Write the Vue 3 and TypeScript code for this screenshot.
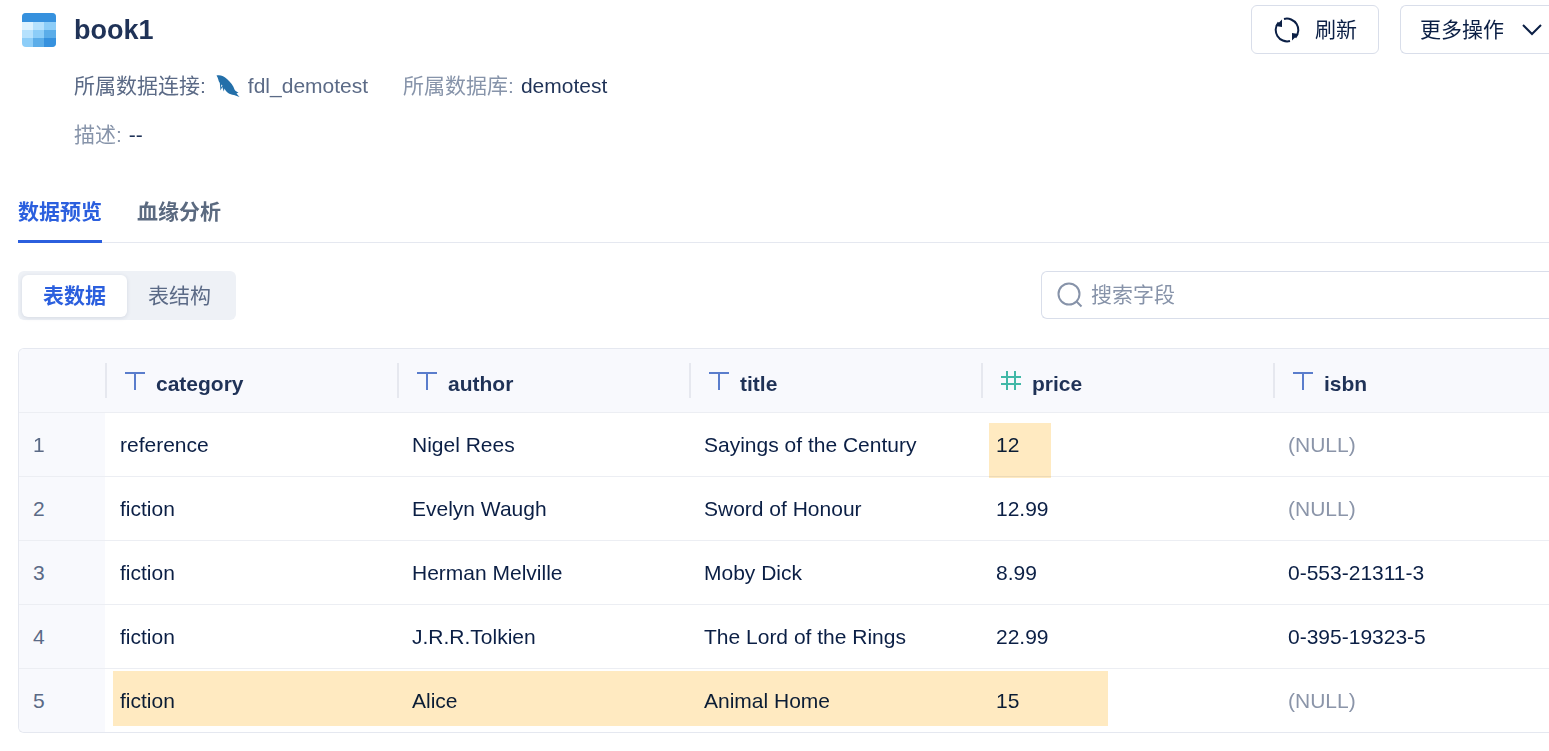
<script setup lang="ts">
import { ref } from 'vue'

type FieldType = 'text' | 'number'
interface Field { name: string; type: FieldType }
interface Row { values: (string | null)[]; mark?: { column: number; kind: 'cell' | 'row' } }

const keyword = ref('')
const tabs = ['数据预览', '血缘分析']
const activeTab = ref(0)
const views = ['表数据', '表结构']
const activeView = ref(0)

const fields: Field[] = [
  { name: 'category', type: 'text' },
  { name: 'author', type: 'text' },
  { name: 'title', type: 'text' },
  { name: 'price', type: 'number' },
  { name: 'isbn', type: 'text' },
]

const rows: Row[] = [
  { values: ['reference', 'Nigel Rees', 'Sayings of the Century', '12', null], mark: { column: 3, kind: 'cell' } },
  { values: ['fiction', 'Evelyn Waugh', 'Sword of Honour', '12.99', null] },
  { values: ['fiction', 'Herman Melville', 'Moby Dick', '8.99', '0-553-21311-3'] },
  { values: ['fiction', 'J.R.R.Tolkien', 'The Lord of the Rings', '22.99', '0-395-19323-5'] },
  { values: ['fiction', 'Alice', 'Animal Home', '15', null], mark: { column: 0, kind: 'row' } },
]
</script>

<template>
  <main class="page">
    <header class="head">
      <svg class="table-icon" viewBox="0 0 34 34" aria-hidden="true">
        <defs><clipPath id="tile"><rect width="34" height="34" rx="4" /></clipPath></defs>
        <g clip-path="url(#tile)">
          <rect width="34" height="34" fill="#8ccdf8" />
          <rect width="34" height="9" fill="#3691de" />
          <rect y="9" width="11" height="8" fill="#dcf2ff" />
          <rect x="11" y="9" width="11" height="8" fill="#b5e1fd" />
          <rect y="17" width="11" height="8" fill="#b5e1fd" />
          <rect x="22" y="17" width="12" height="8" fill="#5bade9" />
          <rect x="11" y="25" width="11" height="9" fill="#5bade9" />
          <rect x="22" y="25" width="12" height="9" fill="#3691de" />
        </g>
      </svg>
      <h1 class="title">book1</h1>
      <div class="actions">
        <button class="btn refresh" type="button">
          <svg width="26" height="26" viewBox="0 0 26 26" fill="none" stroke="#0b1f45" stroke-width="2" aria-hidden="true">
            <path d="M10 2A11.400 11.400 0 0 1 21.400 20.600M16 24A11.400 11.400 0 0 1 4.600 5.400" />
            <path d="M8 2.500V10L1.500 9Z M18 23.500V16L24.500 17Z" fill="#0b1f45" stroke="none" />
          </svg>
          刷新
        </button>
        <button class="btn more" type="button">
          更多操作
          <svg width="20" height="12" viewBox="0 0 20 12" fill="none" stroke="#0b1f45" stroke-width="2" aria-hidden="true">
            <path d="M1 1L10 10L19 1" />
          </svg>
        </button>
      </div>
    </header>

    <section class="meta">
      <div class="meta-row">
        <span class="label strong">所属数据连接:</span>
        <svg class="dolphin" width="24" height="24" viewBox="0 0 24 24" aria-hidden="true">
          <path d="M0.500 1.500C4 0.500 8 2 11 5C14.500 8.500 17.500 11.500 18.500 15.500C19 17 21 17.800 22.500 18.500L20.500 19.500L23.500 23L18 21C13.500 20.500 10 18 8.500 14.500L7.800 17.500L6.300 13L4.500 16.500L3.800 9C2 6.500 2.500 4 0.500 1.500Z" fill="#236fa9" />
          <path d="M5 10.500L5.500 13.500L6.500 11.500Z" fill="#fff" />
        </svg>
        <span class="conn">fdl_demotest</span>
        <span class="label">所属数据库:</span>
        <span class="value">demotest</span>
      </div>
      <div class="meta-row">
        <span class="label">描述:</span>
        <span class="value">--</span>
      </div>
    </section>

    <nav class="tabs" role="tablist">
      <button v-for="(tab, i) in tabs" :key="tab" type="button" role="tab" class="tab"
        :class="{ active: i === activeTab }" :aria-selected="i === activeTab" @click="activeTab = i">{{ tab }}</button>
    </nav>

    <div class="toolbar">
      <div class="segment">
        <button v-for="(view, i) in views" :key="view" type="button" class="seg"
          :class="{ active: i === activeView }" @click="activeView = i">{{ view }}</button>
      </div>
      <label class="search">
        <svg width="26" height="26" viewBox="0 0 26 26" fill="none" stroke="#8793a9" stroke-width="2" aria-hidden="true">
          <circle cx="12" cy="12" r="10.500" />
          <path d="M19.500 19.500L24.500 24.500" />
        </svg>
        <input v-model="keyword" type="text" placeholder="搜索字段" aria-label="搜索字段" />
      </label>
    </div>

    <div class="frame">
      <table class="grid">
        <thead>
          <tr>
            <th class="index"></th>
            <th v-for="field in fields" :key="field.name" scope="col">
              <div class="field">
                <svg v-if="field.type === 'text'" width="20" height="20" viewBox="0 0 20 20" fill="none" stroke="#5a7dcc" stroke-width="2" aria-hidden="true">
                  <path d="M0 2H20M10 2V19" />
                </svg>
                <svg v-else width="20" height="20" viewBox="0 0 20 20" fill="none" stroke="#41b8a7" stroke-width="2" aria-hidden="true">
                  <path d="M0 6H20M0 13H20M6 0V19M14 0V19" />
                </svg>
                <span>{{ field.name }}</span>
              </div>
            </th>
          </tr>
        </thead>
        <tbody>
          <tr v-for="(row, r) in rows" :key="r">
            <td class="index">{{ r + 1 }}</td>
            <td v-for="(value, c) in row.values" :key="c" :class="{ empty: value === null }">
              {{ value ?? '(NULL)' }}
              <span v-if="row.mark?.column === c" class="mark" :class="row.mark.kind"></span>
            </td>
          </tr>
        </tbody>
      </table>
    </div>
  </main>
</template>

<style>
body {
  margin: 0;
  background: #fff;
}
</style>

<style scoped>
.page {
  box-sizing: border-box;
  padding: 5px 0 19px 18px;
  overflow: hidden;
  color: #0b1f45;
  font: 21px/28px "Liberation Sans", "Noto Sans CJK SC", sans-serif;
}
button,
input {
  font: inherit;
  color: inherit;
}
button {
  cursor: pointer;
}
svg {
  display: block;
  flex: none;
}
.head {
  display: flex;
  align-items: center;
  padding-left: 4px;
}
.table-icon {
  width: 34px;
  height: 34px;
}
.title {
  margin: 0 0 0 18px;
  color: #1f3257;
  font-size: 27px;
  line-height: 36px;
}
.actions {
  display: flex;
  gap: 21px;
  margin-left: auto;
}
.btn {
  box-sizing: border-box;
  display: flex;
  align-items: center;
  height: 49px;
  border: 1px solid #d9deea;
  border-radius: 6px;
  background: #fff;
}
.refresh {
  gap: 15px;
  padding: 0 21px 0 22px;
}
.more {
  gap: 18px;
  padding: 0 7px 0 19px;
  border-right: 0;
  border-radius: 6px 0 0 6px;
}
.meta {
  display: flex;
  flex-direction: column;
  gap: 21px;
  padding: 18px 0 0 56px;
}
.meta-row {
  display: flex;
  align-items: center;
}
.label {
  margin-right: 7px;
  color: #8794aa;
}
.label.strong,
.conn {
  color: #5b6a86;
}
.dolphin {
  margin: 0 8px 0 3px;
}
.conn {
  margin-right: 35px;
}
.value {
  color: #1f3257;
}
.tabs {
  display: flex;
  gap: 35px;
  margin-top: 39px;
  border-bottom: 1px solid #e5e8f0;
}
.tab {
  height: 55px;
  margin-bottom: -1px;
  padding: 0 0 4px;
  border: 0;
  border-bottom: 3px solid transparent;
  background: none;
  color: #5b6a80;
  font-weight: 700;
}
.tab.active {
  border-color: #2b5fde;
  color: #2b5fde;
}
.toolbar {
  display: flex;
  justify-content: space-between;
  margin: 28px 0;
}
.segment {
  box-sizing: border-box;
  display: flex;
  height: 49px;
  padding: 4px;
  border-radius: 6px;
  background: #eef1f6;
}
.seg {
  height: 42px;
  padding: 0 21px;
  border: 0;
  border-radius: 6px;
  background: none;
  color: #5b6a86;
}
.seg.active {
  background: #fff;
  color: #2b5fde;
  font-weight: 700;
  box-shadow: 0 1px 4px rgb(30 50 90 / 12%);
}
.search {
  box-sizing: border-box;
  display: flex;
  align-items: center;
  gap: 8px;
  width: 508px;
  max-width: 50%;
  height: 48px;
  padding-left: 15px;
  border: 1px solid #d9deea;
  border-right: 0;
  border-radius: 6px 0 0 6px;
}
.search input {
  flex: 1;
  min-width: 0;
  padding: 0;
  border: 0;
  outline: 0;
  background: none;
}
.search input::placeholder {
  color: #8793a9;
  opacity: 1;
}
.frame {
  overflow: hidden;
  border: 1px solid #e5e8f0;
  border-right: 0;
  border-radius: 6px 0 0 6px;
}
.grid {
  width: 100%;
  border-collapse: separate;
  border-spacing: 0;
  table-layout: fixed;
}
th,
td {
  position: relative;
  box-sizing: border-box;
  width: 292px;
  height: 64px;
  padding: 0 0 0 15px;
  border-bottom: 1px solid #eceef3;
  text-align: left;
  white-space: nowrap;
}
th:last-child,
td:last-child {
  width: auto;
}
th {
  background: #f8f9fd;
  color: #1f3257;
}
.index {
  width: 86px;
  padding-left: 14px;
  background: #f8f9fd;
  color: #5b6a86;
}
tbody tr:last-child td {
  height: 63px;
  border-bottom: 0;
}
th:not(.index) {
  padding-left: 0;
}
.field {
  display: flex;
  gap: 11px;
  height: 35px;
  padding-left: 18px;
  border-left: 2px solid #e6e8ef;
}
.field svg {
  margin-top: 8px;
}
.field span {
  padding-top: 7px;
}
.empty {
  color: #8b95a9;
}
.mark {
  position: absolute;
  top: 10px;
  left: 8px;
  width: 62px;
  height: 55px;
  background: #ffeac1;
  mix-blend-mode: multiply;
  pointer-events: none;
}
.mark.row {
  top: 2px;
  width: 995px;
  z-index: 1;
}
</style>
